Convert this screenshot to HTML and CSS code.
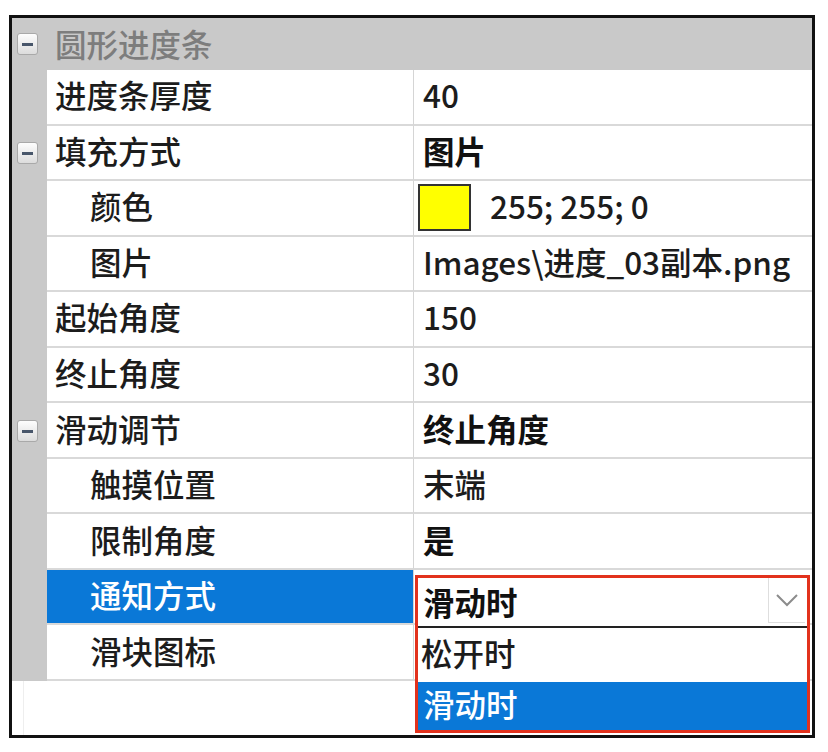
FILE: index.html
```html
<!DOCTYPE html>
<html lang="zh-CN">
<head>
    <meta charset="UTF-8">
    <title>属性 - 圆形进度条</title>
    <link rel="stylesheet" href="styles.css">
</head>
<body>
    <div class="property-grid">
        <div class="group-header">
            <span class="toggle"></span>
            <span class="group-title">圆形进度条</span>
        </div>

        <div class="row">
            <div class="gutter"></div>
            <div class="name">进度条厚度</div>
            <div class="value">40</div>
        </div>
        <div class="row">
            <div class="gutter"><span class="toggle"></span></div>
            <div class="name">填充方式</div>
            <div class="value bold">图片</div>
        </div>
        <div class="row">
            <div class="gutter"></div>
            <div class="name child">颜色</div>
            <div class="value"><span class="swatch"></span>255; 255; 0</div>
        </div>
        <div class="row">
            <div class="gutter"></div>
            <div class="name child">图片</div>
            <div class="value">Images\进度_03副本.png</div>
        </div>
        <div class="row">
            <div class="gutter"></div>
            <div class="name">起始角度</div>
            <div class="value">150</div>
        </div>
        <div class="row">
            <div class="gutter"></div>
            <div class="name">终止角度</div>
            <div class="value">30</div>
        </div>
        <div class="row">
            <div class="gutter"><span class="toggle"></span></div>
            <div class="name">滑动调节</div>
            <div class="value bold">终止角度</div>
        </div>
        <div class="row">
            <div class="gutter"></div>
            <div class="name child">触摸位置</div>
            <div class="value">末端</div>
        </div>
        <div class="row">
            <div class="gutter"></div>
            <div class="name child">限制角度</div>
            <div class="value bold">是</div>
        </div>
        <div class="row">
            <div class="gutter"></div>
            <div class="name child selected">通知方式</div>
            <div class="value editing">
                <div class="combo">
                    <div class="combo-field">
                        <span class="combo-text">滑动时</span>
                        <span class="combo-button">
                            <svg width="24" height="14" viewBox="0 0 24 14">
                                <polyline points="2,2 12,12 22,2" fill="none" stroke="#8c8c8c" stroke-width="2"/>
                            </svg>
                        </span>
                    </div>
                    <div class="combo-list">
                        <div class="combo-item">松开时</div>
                        <div class="combo-item active">滑动时</div>
                    </div>
                </div>
            </div>
        </div>
        <div class="row">
            <div class="gutter"></div>
            <div class="name child">滑块图标</div>
            <div class="value"></div>
        </div>

        <div class="filler"></div>
    </div>
</body>
</html>
```

FILE: styles.css
```css
body {
    margin: 0;
    background-color: #fff;
    font-family: "Noto Sans CJK SC", "Noto Sans", sans-serif;
    font-size: 31.5px;
    font-weight: 500;
    color: #1c1c1c;
}
.property-grid {
    width: 800px;
    height: 717px;
    margin: 15px 0 0 9px;
    border: 3px solid #111;
    display: flex;
    flex-direction: column;
    background-color: #fff;
}
.group-header {
    height: 52px;
    flex-shrink: 0;
    background-color: #c9c9c9;
    display: flex;
    align-items: center;
}
.group-header .toggle {
    margin-left: 5px;
}
.group-title {
    margin-left: 17px;
    padding-bottom: 3px;
    color: #7d7d7d;
}
.toggle {
    width: 21px;
    height: 22px;
    box-sizing: border-box;
    border: 1px solid #a9a9a9;
    border-radius: 3px;
    background: linear-gradient(#fdfdfd, #dcdcdc);
    display: flex;
    align-items: center;
    justify-content: center;
}
.toggle::before {
    content: "";
    width: 11px;
    height: 3px;
    background-color: #48566a;
}
.row {
    height: 55.55px;
    flex-shrink: 0;
    display: flex;
}
.gutter {
    width: 35px;
    flex-shrink: 0;
    background-color: #c9c9c9;
    display: flex;
    align-items: center;
    padding-left: 5px;
    box-sizing: border-box;
}
.name {
    width: 367px;
    flex-shrink: 0;
    box-sizing: border-box;
    padding: 0 0 5px 8px;
    border-bottom: 2px solid #d9d9d9;
    border-right: 1px solid #d5d5d5;
    display: flex;
    align-items: center;
}
.name.child {
    padding-left: 43px;
}
.name.selected {
    background-color: #0a78d7;
    color: #fff;
}
.value {
    flex-grow: 1;
    box-sizing: border-box;
    padding: 0 0 5px 9px;
    border-bottom: 2px solid #d9d9d9;
    display: flex;
    align-items: center;
    white-space: nowrap;
}
.bold {
    font-weight: bold;
    color: #111;
}
.swatch {
    width: 53px;
    height: 47px;
    box-sizing: border-box;
    margin: 5px 19px 0 -5px;
    border: 2px solid #333;
    background-color: #ffff00;
}
.value.editing {
    position: relative;
}
.combo {
    position: absolute;
    left: 1px;
    top: 5px;
    width: 395px;
    height: 158px;
    box-sizing: border-box;
    border: 3px solid #e2321d;
    background-color: #fff;
    display: flex;
    flex-direction: column;
}
.combo-field {
    height: 48px;
    display: flex;
    align-items: flex-start;
}
.combo-text {
    flex-grow: 1;
    padding: 0 0 0 5px;
    font-weight: bold;
    color: #111;
}
.combo-button {
    width: 37px;
    height: 45px;
    margin-right: 2px;
    box-sizing: border-box;
    border-left: 1px solid #dedede;
    border-bottom: 1px solid #dedede;
    display: flex;
    align-items: center;
    justify-content: center;
}
.combo-list {
    flex-grow: 1;
    border-top: 2px solid #222;
    display: flex;
    flex-direction: column;
}
.combo-item {
    height: 54px;
    padding: 0 0 5px 3px;
    box-sizing: border-box;
    display: flex;
    align-items: center;
}
.combo-item.active {
    height: 48px;
    background-color: #0a78d7;
    color: #fff;
    padding-left: 5px;
}
.filler {
    flex-grow: 1;
    margin-left: 11px;
    border-left: 1px solid #eeeeee;
}
```
